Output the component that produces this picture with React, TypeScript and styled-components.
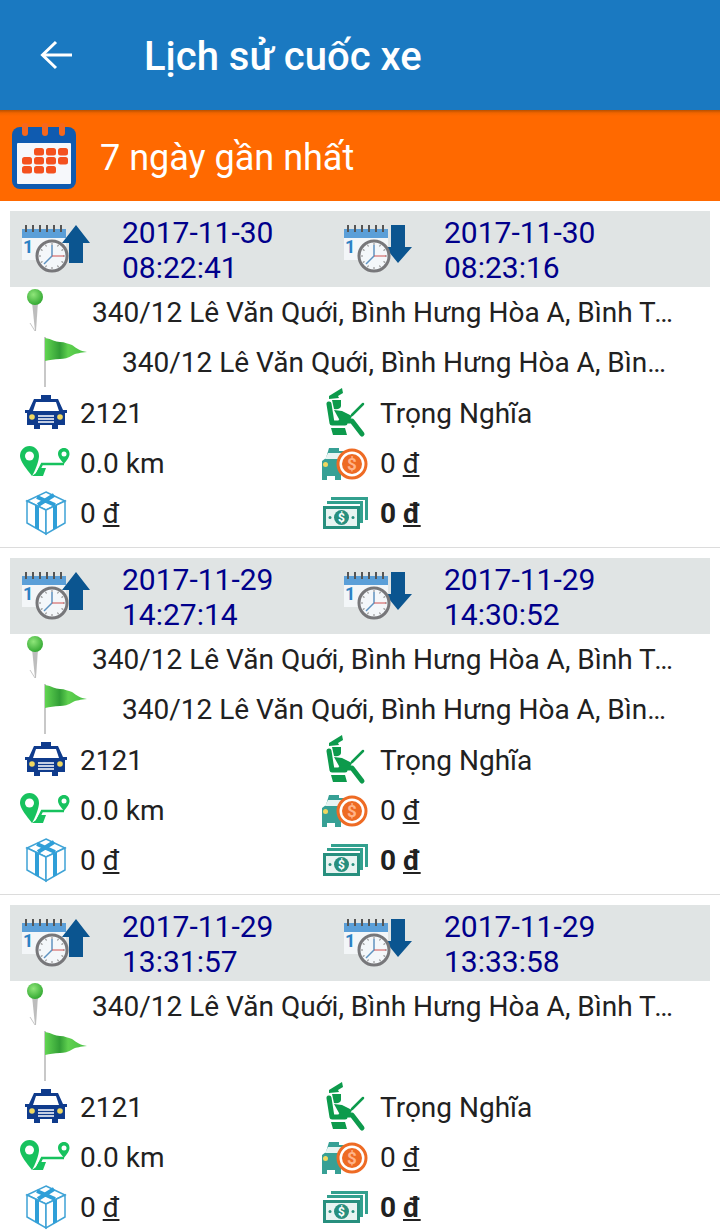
import styled, { createGlobalStyle } from "styled-components";

const GlobalStyle = createGlobalStyle`
  html, body {
    margin: 0;
    padding: 0;
    background: #fff;
  }
  body {
    font-family: Roboto, "Noto Sans", sans-serif;
    color: #212121;
  }
`;

const Page = styled.div`
  width: 720px;
  height: 1230px;
  overflow: hidden;
  background: #fff;
`;

const Header = styled.header`
  height: 110px;
  background: #1a79c1;
  display: flex;
  align-items: center;
  padding-left: 38px;
  box-sizing: border-box;
`;

const BackButton = styled.div`
  width: 36px;
  height: 36px;
  display: flex;
  margin-right: 70px;
`;

const Title = styled.h1`
  margin: 0;
  color: #fff;
  font-size: 40px;
  font-weight: 500;
  position: relative;
  top: 1px;
`;

const FilterBar = styled.div`
  height: 91px;
  background: linear-gradient(#b85000 0, #f06500 3px, #ff6900 6px);
  display: flex;
  align-items: center;
  padding-left: 12px;
  gap: 24px;
  color: #fff;
  font-size: 36px;
`;

const FilterLabel = styled.span`
  position: relative;
  top: 2px;
`;

const Trip = styled.section`
  padding: 10px 10px 9px;
  border-bottom: 1px solid #dcdcdc;
`;

const TimeBar = styled.div`
  height: 76px;
  background: #e0e4e4;
  display: grid;
  grid-template-columns: 322px 1fr;
`;

const TimeCell = styled.div`
  display: flex;
  align-items: center;
  padding-left: 12px;
  gap: 32px;
`;

const TimeText = styled.div`
  color: #00008b;
  font-size: 30px;
  line-height: 35px;
  position: relative;
  top: 1px;
`;

const PlaceRow = styled.div<{ $flag?: boolean }>`
  height: 50px;
  display: flex;
  align-items: center;
  padding-left: ${(p) => (p.$flag ? "34px" : "12px")};
  box-sizing: border-box;
`;

const PlaceIcon = styled.div<{ $flag?: boolean }>`
  width: ${(p) => (p.$flag ? "44px" : "26px")};
  height: 50px;
  margin-right: ${(p) => (p.$flag ? "34px" : "44px")};
  flex: none;
`;

const PlaceText = styled.div<{ $flag?: boolean }>`
  width: ${(p) => (p.$flag ? "546px" : "586px")};
  font-size: 28px;
  white-space: nowrap;
  overflow: hidden;
  text-overflow: ellipsis;
`;

const InfoGrid = styled.div`
  display: grid;
  grid-template-columns: 300px 1fr;
  grid-auto-rows: 50px;
  margin-top: 1px;
`;

const InfoCell = styled.div`
  display: flex;
  align-items: center;
  font-size: 28px;
`;

const InfoIcon = styled.div`
  width: 50px;
  height: 50px;
  margin: -1px 10px 0;
  flex: none;
  display: flex;
`;

const Currency = styled.span`
  text-decoration: underline;
`;

const Total = styled.span`
  font-weight: 700;
`;

const IconSlot = styled.div<{ $x: number; $y: number }>`
  margin-left: ${(p) => p.$x}px;
  margin-top: ${(p) => p.$y}px;
  line-height: 0;
`;

const Arrow = () => (
  <svg width="36" height="36" viewBox="0 0 36 36" fill="none" stroke="#fff" strokeWidth="3">
    <path d="M34 18H5" />
    <path d="M18 5 4.500 18 18 31" />
  </svg>
);

const CalendarIcon = () => (
  <svg width="64" height="66" viewBox="0 0 64 66">
    <rect x="0" y="4" width="64" height="62" rx="8" fill="#0f5bb0" />
    <rect x="5" y="20" width="54" height="41" rx="1" fill="#f6f8fb" />
    {[13, 33, 50].map((x) => (
      <rect key={x} x={x - 3} y="0" width="6" height="13" rx="3" fill="#f4671e" />
    ))}
    {[
      [22, 24],
      [34, 24],
      [46, 24],
      [10, 33],
      [22, 33],
      [34, 33],
      [46, 33],
      [10, 42],
      [22, 42],
      [34, 42],
    ].map(([x, y]) => (
      <rect key={`${x}-${y}`} x={x} y={y + 1} width="10" height="7.500" rx="2.500" fill="#f4511e" />
    ))}
  </svg>
);

const ClockCalendar = ({ up }: { up?: boolean }) => (
  <svg width="68" height="50" viewBox="0 0 68 50">
    <rect x="0" y="5" width="44" height="31" fill="#f3f6f8" />
    <rect x="0" y="5" width="44" height="9" fill="#5b9fd8" />
    {[3, 10, 17, 24, 31, 38].map((x) => (
      <rect key={x} x={x} y="1" width="2" height="7" fill="#555" />
    ))}
    <text x="1" y="29" fontFamily="Roboto, sans-serif" fontWeight="700" fontSize="18" fill="#2d82c4">
      1
    </text>
    {up ? (
      <path d="M40 19 54 1 68 19H61V39H47V19Z" fill="#0b5590" />
    ) : (
      <path d="M47 1H61V23H68L54 39 41 23H47Z" fill="#0b5590" />
    )}
    <circle cx="30" cy="32" r="15" fill="#f4f7fa" stroke="#77777a" strokeWidth="3" />
    {[0, 30, 60, 90, 120, 150, 180, 210, 240, 270, 300, 330].map((a) => (
      <rect key={a} x="29.500" y="19" width="1" height="2" fill="#888" transform={`rotate(${a} 30 32)`} />
    ))}
    <path d="M30 21V32L22 40" fill="none" stroke="#5f93c0" strokeWidth="1.500" />
    <path d="M30 32H42" fill="none" stroke="#d05050" strokeWidth="1" />
  </svg>
);

const PinIcon = () => (
  <svg width="26" height="50" viewBox="0 0 26 50">
    <defs>
      <radialGradient id="pinHead" cx="40%" cy="35%" r="70%">
        <stop offset="0" stopColor="#8fe67a" />
        <stop offset="1" stopColor="#2ea52e" />
      </radialGradient>
    </defs>
    <path d="M10 15H16L14 44 13 44Z" fill="#bdbdbd" />
    <path d="M8 36 13 44" stroke="#c8c8c8" strokeWidth="1" />
    <circle cx="13" cy="10" r="8" fill="url(#pinHead)" />
  </svg>
);

const FlagIcon = () => (
  <svg width="44" height="50" viewBox="0 0 44 50">
    <defs>
      <linearGradient id="flagCloth" x1="0" x2="1" y1="0" y2="0">
        <stop offset="0" stopColor="#62d552" />
        <stop offset="0.35" stopColor="#329e36" />
        <stop offset="0.55" stopColor="#5fd04f" />
        <stop offset="1" stopColor="#49c044" />
      </linearGradient>
    </defs>
    <rect x="0" y="0" width="2" height="50" fill="#c8c8c8" />
    <path d="M1 1C8 2 11 5 16 5 21 5 24 7 28 8 32 11 36 14 43 15 36 16 33 16 29 18 24 21 20 22 16 22 10 22 6 23 1 24Z" fill="url(#flagCloth)" />
  </svg>
);

const TaxiIcon = () => (
  <svg width="42" height="34" viewBox="0 0 42 34">
    <path d="M16 0H26V4H16Z" fill="#0f3b8c" />
    <path d="M9 4H33L38 15 42 15V18L40 18V30H33V34H27V30H15V34H9V30H2V18L0 18V15H4Z" fill="#0f3b8c" />
    <path d="M11 7H31L34 16H8Z" fill="#fff" />
    <circle cx="7" cy="22" r="2.800" fill="#f0d860" />
    <circle cx="35" cy="22" r="2.800" fill="#f0d860" />
    <path d="M13 21H29M13 24H29M13 27H29" stroke="#fff" strokeWidth="1.400" />
  </svg>
);

const RouteIcon = () => (
  <svg width="50" height="32" viewBox="0 0 50 32">
    <path d="M9.500 0C4 0 0 4.500 0 10 0 15 7 24 12 30 15 25 19 15 19 10 19 4.500 15 0 9.500 0Z" fill="#17c25e" />
    <circle cx="9.500" cy="10" r="4.500" fill="#fff" />
    <path d="M44 2C40.500 2 38 4.500 38 8 38 11.500 42 15 44 18 46 15 49.500 11.500 49.500 8 49.500 4.500 47.500 2 44 2Z" fill="#17c25e" />
    <circle cx="44" cy="8" r="2.500" fill="#fff" />
    <path d="M44 18H22L17 28" fill="none" stroke="#17c25e" strokeWidth="2.500" />
    <path d="M12 30H23L26 22H19L16 27Z" fill="#17c25e" />
  </svg>
);

const GiftIcon = () => (
  <svg width="42" height="46" viewBox="0 0 42 46">
    <path d="M21 2 40 11 21 20 2 11Z" fill="#fff" stroke="#3fa3d6" strokeWidth="1.500" />
    <path d="M2 11 21 20V44L2 33Z" fill="#fff" stroke="#3fa3d6" strokeWidth="1.500" />
    <path d="M40 11 21 20V44L40 33Z" fill="#fff" stroke="#3fa3d6" strokeWidth="1.500" />
    <path d="M10 15 14 17V40L10 38Z" fill="#2f9fd8" />
    <path d="M28 17 32 15V38L28 40Z" fill="#2f9fd8" />
    <path d="M12 7 30 15M29 5 13 15" stroke="#2f9fd8" strokeWidth="4" />
  </svg>
);

const DriverIcon = () => (
  <svg width="44" height="50" viewBox="0 0 44 50" fill="#0d9a4c">
    <path d="M4 8 17 0 18 5 13 8 14 10 4 11Z" />
    <path d="M7 12H16V18C16 20 13 22 9 21Z" />
    <path d="M9 22 17 23 27 28 25 32 14 31Z" />
    <path d="M4 16 7 35H20" fill="none" stroke="#0d9a4c" strokeWidth="5" strokeLinecap="round" strokeLinejoin="round" />
    <path d="M16 33H27L37 46" fill="none" stroke="#0d9a4c" strokeWidth="5" strokeLinecap="round" strokeLinejoin="round" />
    <path d="M27 27 38 16" stroke="#0d9a4c" strokeWidth="2.500" strokeLinecap="round" />
    <path d="M6 40H20L22 47H8Z" />
  </svg>
);

const CarMoneyIcon = () => (
  <svg width="48" height="34" viewBox="0 0 48 34">
    <path d="M8 1H18V4H24V28H20V33H14V29H6V33H1V14L5 11Z" fill="#37a095" />
    <rect x="2" y="15" width="5" height="5" rx="2.500" fill="#f0d860" />
    <path d="M7 6H20V12H4Z" fill="#e8f4f2" />
    <circle cx="31" cy="17" r="14" fill="#fff" stroke="#ee6b24" strokeWidth="3" />
    <circle cx="31" cy="17" r="10" fill="#ee6b24" />
    <text x="31" y="23" textAnchor="middle" fontFamily="Roboto, sans-serif" fontWeight="700" fontSize="17" fill="#ffb48a">
      $
    </text>
  </svg>
);

const CashIcon = () => (
  <svg width="46" height="34" viewBox="0 0 46 34">
    <path d="M8 5V2H45V25H42V5Z" fill="#32a08e" />
    <path d="M4 9V6H40V28H37V9Z" fill="#32a08e" />
    <rect x="0" y="11" width="37" height="23" fill="#278f7e" />
    <rect x="3" y="14" width="31" height="17" fill="#e8f4f2" />
    <circle cx="18.500" cy="22.500" r="7.500" fill="#278f7e" />
    <text x="18.500" y="27" textAnchor="middle" fontFamily="Roboto, sans-serif" fontWeight="700" fontSize="12" fill="#fff">
      $
    </text>
    <circle cx="7" cy="22.500" r="1.500" fill="#278f7e" />
    <circle cx="30" cy="22.500" r="1.500" fill="#278f7e" />
  </svg>
);

type TripData = {
  startDate: string;
  startTime: string;
  endDate: string;
  endTime: string;
  to: string;
};

const ADDRESS = "340/12 Lê Văn Quới, Bình Hưng Hòa A, Bình Tân, Hồ Chí Minh";

const trips: TripData[] = [
  { startDate: "2017-11-30", startTime: "08:22:41", endDate: "2017-11-30", endTime: "08:23:16", to: ADDRESS },
  { startDate: "2017-11-29", startTime: "14:27:14", endDate: "2017-11-29", endTime: "14:30:52", to: ADDRESS },
  { startDate: "2017-11-29", startTime: "13:31:57", endDate: "2017-11-29", endTime: "13:33:58", to: "" },
];

function App() {
  return (
    <Page>
      <GlobalStyle />
      <Header>
        <BackButton>
          <Arrow />
        </BackButton>
        <Title>Lịch sử cuốc xe</Title>
      </Header>
      <FilterBar>
        <CalendarIcon />
        <FilterLabel>7 ngày gần nhất</FilterLabel>
      </FilterBar>
      {trips.map((t) => (
        <Trip key={t.startTime}>
          <TimeBar>
            <TimeCell>
              <ClockCalendar up />
              <TimeText>
                {t.startDate}
                <br />
                {t.startTime}
              </TimeText>
            </TimeCell>
            <TimeCell>
              <ClockCalendar />
              <TimeText>
                {t.endDate}
                <br />
                {t.endTime}
              </TimeText>
            </TimeCell>
          </TimeBar>
          <PlaceRow>
            <PlaceIcon>
              <PinIcon />
            </PlaceIcon>
            <PlaceText>{ADDRESS}</PlaceText>
          </PlaceRow>
          <PlaceRow $flag>
            <PlaceIcon $flag>
              <FlagIcon />
            </PlaceIcon>
            <PlaceText $flag>{t.to}</PlaceText>
          </PlaceRow>
          <InfoGrid>
            <InfoCell>
              <InfoIcon>
                <IconSlot $x={5} $y={7}>
                  <TaxiIcon />
                </IconSlot>
              </InfoIcon>
              2121
            </InfoCell>
            <InfoCell>
              <InfoIcon>
                <IconSlot $x={5} $y={0}>
                  <DriverIcon />
                </IconSlot>
              </InfoIcon>
              Trọng Nghĩa
            </InfoCell>
            <InfoCell>
              <InfoIcon>
                <IconSlot $x={0} $y={8}>
                  <RouteIcon />
                </IconSlot>
              </InfoIcon>
              0.0 km
            </InfoCell>
            <InfoCell>
              <InfoIcon>
                <IconSlot $x={1} $y={9}>
                  <CarMoneyIcon />
                </IconSlot>
              </InfoIcon>
              0&nbsp;<Currency>đ</Currency>
            </InfoCell>
            <InfoCell>
              <InfoIcon>
                <IconSlot $x={5} $y={2}>
                  <GiftIcon />
                </IconSlot>
              </InfoIcon>
              0&nbsp;<Currency>đ</Currency>
            </InfoCell>
            <InfoCell>
              <InfoIcon>
                <IconSlot $x={3} $y={7}>
                  <CashIcon />
                </IconSlot>
              </InfoIcon>
              <Total>
                0&nbsp;<Currency>đ</Currency>
              </Total>
            </InfoCell>
          </InfoGrid>
        </Trip>
      ))}
    </Page>
  );
}

export default App;
